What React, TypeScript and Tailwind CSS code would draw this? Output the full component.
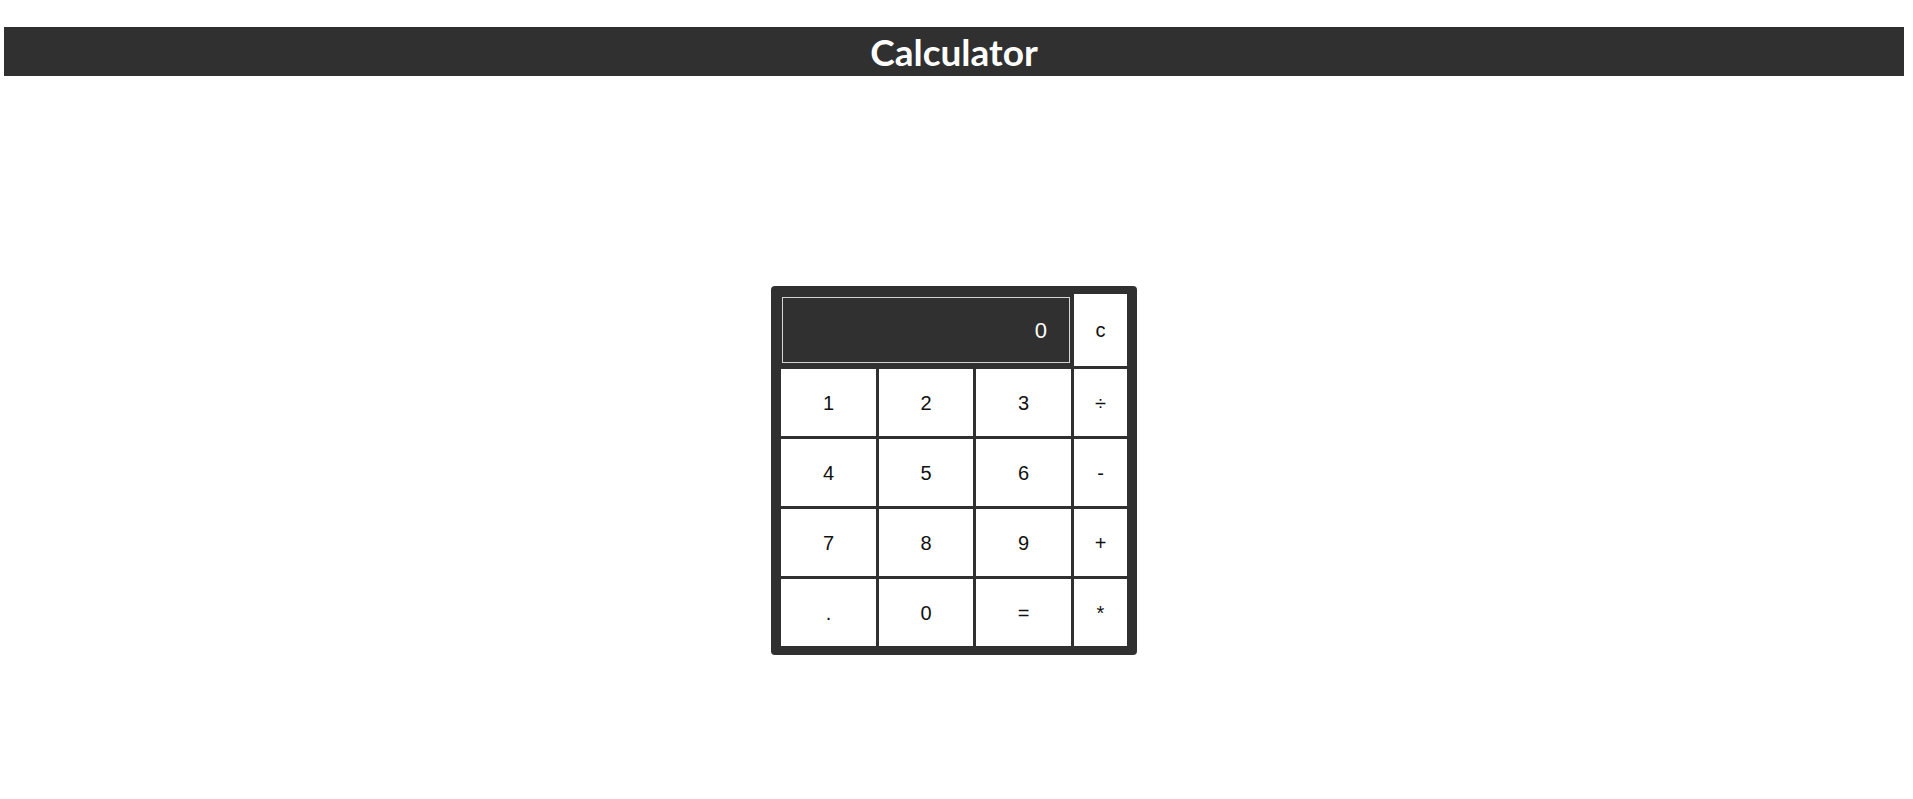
const rows = [
  ["1", "2", "3", "÷"],
  ["4", "5", "6", "-"],
  ["7", "8", "9", "+"],
  [".", "0", "=", "*"],
];

export default function App() {
  return (
    <div className="min-h-screen bg-white font-['Liberation_Sans',Arial,sans-serif]">
      {/* Title bar */}
      <div className="ml-[4px] mt-[27px] w-[1900px] h-[49px] bg-[#303030] flex items-center justify-center">
        <h1 className="font-['Lato',sans-serif] font-bold text-[37px] leading-none text-white">
          Calculator
        </h1>
      </div>

      {/* Calculator */}
      <div className="ml-[4px] w-[1900px] mt-[210px] flex justify-center">
        <div className="bg-[#303030] rounded-[4px] pt-[8px] pl-[10px] pr-[10px] pb-[9px]">
          <div className="grid grid-cols-[95px_94px_95px_53px] grid-rows-[72px_67px_67px_67px_67px] gap-[3px]">
            <div className="col-span-3 self-center h-[68px] p-px">
              <div className="h-full border border-[#d4d4d4] bg-[#303030] flex items-center justify-end pr-[22px] text-white text-[22px]">
                0
              </div>
            </div>
            <button className="bg-white text-[#111] text-[20px] flex items-center justify-center">
              c
            </button>
            {rows.flat().map((k, i) => (
              <button
                key={i}
                className="bg-white text-[#111] text-[20px] flex items-center justify-center"
              >
                {k}
              </button>
            ))}
          </div>
        </div>
      </div>
    </div>
  );
}
